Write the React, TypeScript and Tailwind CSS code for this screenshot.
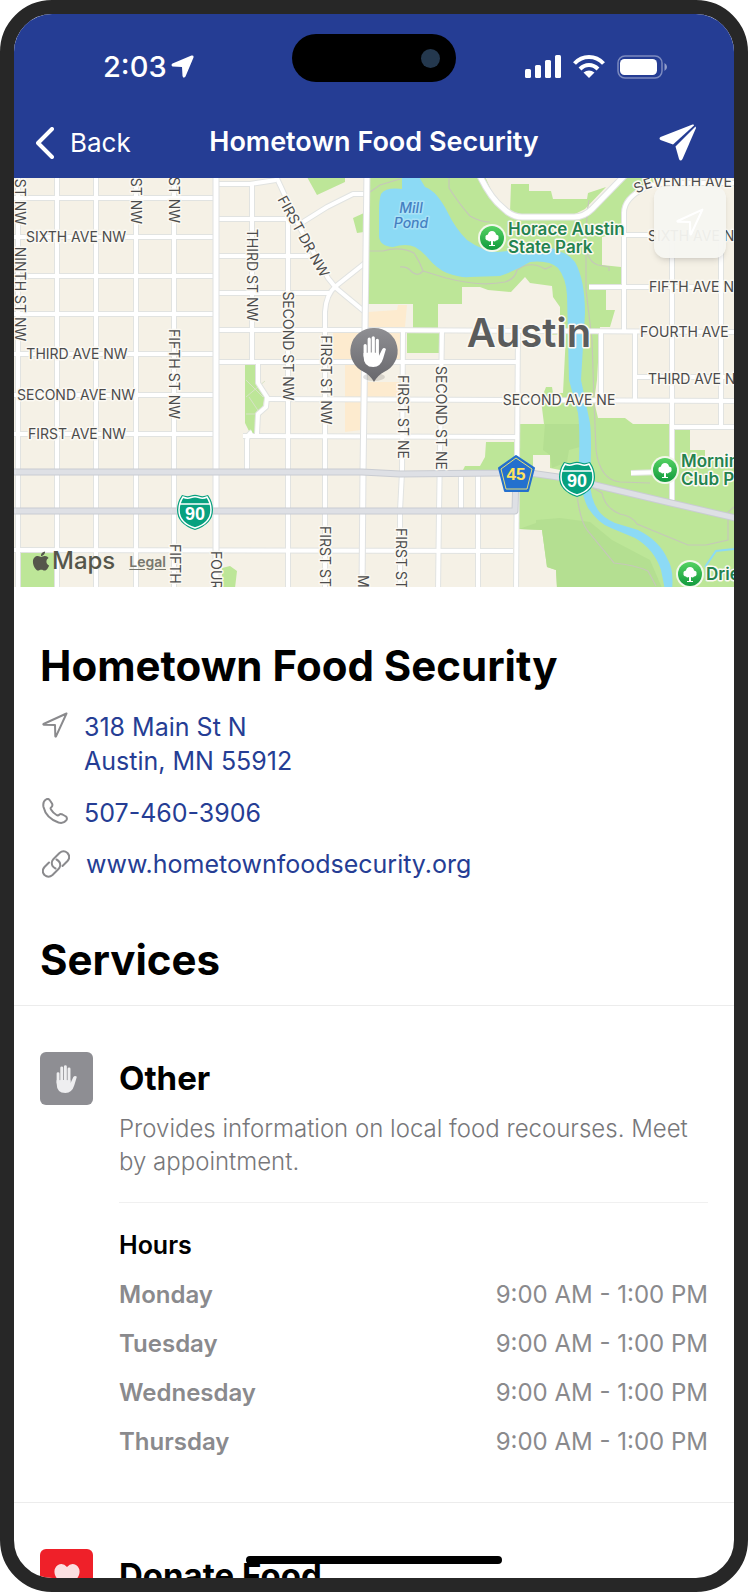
import { FaApple } from "react-icons/fa";

const localRoads = [
  // north-south, west side
  "M18 170V592", "M57 170V592", "M96 170V592", "M136 170V592", "M174 170V592", "M252 184V362",
  "M288 219V592", "M403 331L402 472L400 511V592", "M442 331L439 511L438 592",
  "M461 472V511", "M478 472V592", "M518 332L516 592",
  // east-west, west side
  "M10 198H216", "M10 237H216", "M10 276H216", "M10 314H216", "M10 354H216", "M10 395H216", "M10 434H216",
  "M10 550L513 551", "M216 184L250 184L276 180", "M216 219H298", "M216 256H310", "M216 293H329",
  "M216 330H365L734 332", "M216 362H518", "M267 399L740 401", "M243 436L516 437",
  // around the small park
  "M258 362V383L267 397L266 407L258 414L257 434", "M247 472V440Q248 434 252 432",
  // diagonals
  "M274 172L300 228L328 278L336 288L365 312", "M303 222L327 207L353 194H367",
  "M365 263L336 286Q326 294 325 312V592",
  // east side
  "M624 332V213Q624 198 645 188Q652 183 680 183H740", "M672 235V500", "M721 235V427", "M635 332V400", "M601 332V400",
  "M624 235H740", "M589 287H740", "M636 377H740", "M672 427H740", "M631 473L662 472",
];

const mainRoads = [
  "M216 170V592", "M367 170L365 330L363 472L362 592",
  "M478 172Q490 198 503 208Q512 217 522 217H574Q584 217 592 209L628 172",
];

const highways = [
  "M10 472H362L400 474L498 473L516 471L558 477L595 485L671 503L740 519",
  "M10 511H515L516 474",
];

const trails = [
  "M370 192L380 185L400 179", "M369 251H383Q400 246 414 253Q420 262 423 271Q418 277 412 272Q407 266 400 267",
  "M423 271L446 278Q480 287 505 282Q515 279 517 270Q530 260 545 269L552 266", "M449 177V188Q460 205 470 216Q480 222 490 222",
  "M589 200Q586 215 586 250Q590 263 598 265L609 267V271", "M586 250V290L592 340L594 400L596 450Q600 480 620 482L650 483",
  "M577 495Q580 520 587 530L614 563Q635 565 648 571L656 586", "M593 488L602 493Q605 508 620 514Q632 516 637 524L688 545H706L728 540V512L734 507",
];

const labels = [
  { text: "SIXTH AVE NW", x: 76, y: 236 },
  { text: "THIRD AVE NW", x: 77, y: 353 },
  { text: "SECOND AVE NW", x: 76, y: 394 },
  { text: "FIRST AVE NW", x: 77, y: 433 },
  { text: "SECOND AVE NE", x: 559, y: 399 },
  { text: "NINTH ST NW", x: 20, y: 294, turn: 90 },
  { text: "ST NW", x: 20, y: 225, turn: 90, anchor: "end" },
  { text: "ST NW", x: 136, y: 224, turn: 90, anchor: "end" },
  { text: "ST NW", x: 174, y: 223, turn: 90, anchor: "end" },
  { text: "FIFTH ST NW", x: 174, y: 374, turn: 90 },
  { text: "THIRD ST NW", x: 252, y: 275, turn: 90 },
  { text: "FIRST DR NW", x: 304, y: 236, turn: 61 },
  { text: "SECOND ST NW", x: 288, y: 346, turn: 90 },
  { text: "FIRST ST NW", x: 326, y: 380, turn: 90 },
  { text: "FIRST ST NE", x: 403, y: 417, turn: 90 },
  { text: "SECOND ST NE", x: 441, y: 418, turn: 90 },
  { text: "FIFTH", x: 175, y: 544, turn: 90, anchor: "start" },
  { text: "FOUR", x: 216, y: 551, turn: 90, anchor: "start" },
  { text: "FIRST ST", x: 325, y: 526, turn: 90, anchor: "start" },
  { text: "M", x: 363, y: 575, turn: 90, anchor: "start" },
  { text: "FIRST ST", x: 401, y: 528, turn: 90, anchor: "start" },
  { text: "SIXTH AVE N", x: 648, y: 235, anchor: "start" },
  { text: "FIFTH AVE N", x: 649, y: 286, anchor: "start" },
  { text: "FOURTH AVE", x: 640, y: 331, anchor: "start" },
  { text: "THIRD AVE N", x: 648, y: 378, anchor: "start" },
];

const hours = [
  { day: "Monday", time: "9:00 AM - 1:00 PM" },
  { day: "Tuesday", time: "9:00 AM - 1:00 PM" },
  { day: "Wednesday", time: "9:00 AM - 1:00 PM" },
  { day: "Thursday", time: "9:00 AM - 1:00 PM" },
];

const HandShape = () => (
  <>
    <g stroke="currentColor" strokeWidth="9" strokeLinecap="round">
      <path d="M6 27V56M17.500 9V56M29 5V56M40.500 12V56" />
    </g>
    <path
      fill="currentColor"
      d="M1.500 48Q23 46 45 48V57L54 38Q59 31 65 37L57 64Q50 88 29 88Q1.500 88 1.500 58Z"
    />
  </>
);

const ArrowOutline = ({ className }: { className: string }) => (
  <svg viewBox="0 0 26 26" className={className} fill="none" stroke="currentColor" strokeWidth="2" strokeLinejoin="round" aria-hidden="true">
    <path d="M24.500 1.500L1.500 12Q1 12.500 1.800 12.700L13 13L13.300 24.200Q13.500 25 14 24.300Z" />
  </svg>
);

const Roads = ({ paths, casing, fill, width }: { paths: string[]; casing: string; fill: string; width: number }) => (
  <g fill="none" strokeLinejoin="round">
    {paths.map((d) => <path key={d} d={d} stroke={casing} strokeWidth={width + 2} />)}
    {paths.map((d) => <path key={d + "fill"} d={d} stroke={fill} strokeWidth={width} />)}
  </g>
);

const ParkMarker = ({ x, y }: { x: number; y: number }) => (
  <g transform={`translate(${x} ${y})`}>
    <circle r="14" fill="#f3f8ea" />
    <circle r="12" fill="url(#park)" />
    <path fill="#fff" d="M-1 7V3Q-3 4-4 2.500Q-7 2-6.500-0.500Q-7-3-4-3.500Q-3.500-7 0-7Q3.500-7 4-3.500Q7-3 6.500-0.500Q7 2 4 2.500Q3 4 1 3V7H3V8H-3V7Z" />
  </g>
);

const Interstate = ({ x, y }: { x: number; y: number }) => (
  <g transform={`translate(${x} ${y})`}>
    <path
      d="M-13-17Q-8-15-4-16.500Q0-18 4-16.500Q8-15 13-17Q18-10 18-2Q18 12 0 18Q-18 12-18-2Q-18-10-13-17Z"
      fill="#07a17f"
    />
    <path
      d="M-12-15Q-8-13-4-14.500Q0-16 4-14.500Q8-13 12-15Q16-9 16-2Q16 11 0 16Q-16 11-16-2Q-16-9-12-15ZM-15-8H15"
      fill="none"
      stroke="#fff"
      strokeWidth="1.500"
    />
    <text y="8" textAnchor="middle" fontSize="18" fontWeight="700" fill="#fff">90</text>
  </g>
);

const TownMap = () => (
  <svg
    viewBox="14 178 720 409"
    preserveAspectRatio="xMidYMid slice"
    className="block h-[409px] w-full"
    role="img"
    aria-label="Map of Austin"
  >
    <defs>
      <linearGradient id="park" x1="0" y1="0" x2="0" y2="1">
        <stop offset="0" stopColor="#55d262" />
        <stop offset="1" stopColor="#119a3d" />
      </linearGradient>
      <linearGradient id="pin" x1="0" y1="0" x2="0" y2="1">
        <stop offset="0" stopColor="#8f8f93" />
        <stop offset="1" stopColor="#67676c" />
      </linearGradient>
      <path id="seventh" d="M637 194Q646 188 656 187H760" />
    </defs>
    <rect x="14" y="170" width="720" height="420" fill="#f5f1e6" />

    {/* parks */}
    <g fill="#bde698">
      <path d="M367 170H482L498 205L511 215L578 217L588 212L623 177H662L638 190L625 202L623 232L602 237V265L621 267V284L589 286V289H606V310H615L610 327H600L597 380L594 401L598 418H625L633 424H670L674 429H690V450H705V458H734V588H557L556 570L547 567L542 530L519 529V424H544L541 400L546 387H552L553 393H563L566 334L547 335V330H560V307L553 297L552 286L530 283L525 277L511 292L488 290L480 287H462V304H438V328H413V304H367Z" />
      <path d="M511 184H529V191H551L553 199H587L588 193L606 187L585 209L575 214H518L510 212Z" />
      <path d="M307 177H345V182L317 195ZM353 218L364 213V232L357 233ZM407 333H439V353H407ZM245 364H257V384L265 397L256 433H250L245 423Z" />
      <path d="M486 442H514V470H463L465 466H480L485 457Z" />
      <path d="M20 553H55V588H20ZM222 568L230 566L237 571L235 588H222Z" />
    </g>
    <path fill="#b4df91" d="M545 424H580V447L569 450L567 462L552 468L550 455L543 450ZM536 520L560 518L590 522L612 540L650 560L662 588H557L556 570L547 567L542 530L519 529L536 523Z" />
    <path fill="#f5f1e6" d="M533 455H550V468L560 470V474H533Z" />
    <path stroke="#d7e2c6" fill="none" d="M246 397L265 381M246 414H262M249 397L259 412M246 380L263 397" />
    <path fill="#fdebcf" d="M368 312L397 310L398 305H407L405 327H368ZM333 333H405V359H361V430L345 432V362H333ZM367 382H399V397H367Z" />

    <g fill="none" stroke="#c5c8b8" strokeWidth="1.200">
      {trails.map((d) => <path key={d} d={d} />)}
    </g>

    {/* pond and river */}
    <path
      fill="#8cdaf5"
      d="M402 170V189Q386 187 381 194Q379 200 379 210V237Q380 246 393 247Q406 243 415 247Q422 251 427 257Q437 269 447 273Q460 278 470 277L500 276Q515 271 530 262Q549 260 558 268Q566 278 567 295L569 380L578 413Q580 430 579 460Q579 490 588 508Q599 524 611 528L635 538Q654 549 661 570L665 590H672Q674 570 668 560Q660 541 638 530L615 523Q602 517 598 510Q590 498 590 480Q592 440 590 423L581 380L585 313Q585 280 575 262Q570 255 561 252Q548 244 525 249L498 252Q484 252 467 240Q455 228 448 213Q437 191 425 187L415 170Z"
    />
    <path fill="none" stroke="#8cdaf5" strokeWidth="2" d="M705 567L716 551L734 549" />

    <Roads paths={localRoads} casing="#e1e3e1" fill="#fff" width={4} />
    <Roads paths={mainRoads} casing="#dfe1e1" fill="#fff" width={5} />
    <Roads paths={highways} casing="#c9ccd2" fill="#dee0e5" width={5} />

    <g fontFamily="Inter, sans-serif" stroke="#fbf9f3" strokeWidth="3" strokeLinejoin="round" paintOrder="stroke">
      <g fontSize="14" fill="#4c4c4c">
        {labels.map(({ text, x, y, turn = 0, anchor = "middle" }) => (
          <text
            key={`${text}${x}${y}`}
            transform={`translate(${x} ${y}) rotate(${turn})`}
            textAnchor={anchor as "start" | "middle" | "end"}
            dominantBaseline="central"
          >
            {text}
          </text>
        ))}
        <text><textPath href="#seventh">SEVENTH AVE</textPath></text>
      </g>
      <text x="529" y="347" textAnchor="middle" fontSize="40" fontWeight="600" fill="#5a5c5c">Austin</text>
      <g fontSize="17" fontWeight="600" fill="#24834f">
        <text x="508" y="235">Horace Austin</text>
        <text x="508" y="253">State Park</text>
        <text x="681" y="467">Mornin</text>
        <text x="681" y="485">Club P</text>
        <text x="706" y="580">Drie</text>
      </g>
      <g fontSize="14" fontStyle="italic" fontWeight="500" fill="#4580c2" stroke="#a9e2f7" textAnchor="middle">
        <text x="411" y="213">Mill</text>
        <text x="411" y="228">Pond</text>
      </g>
    </g>

    <ParkMarker x={492} y={238} />
    <ParkMarker x={665} y={470} />
    <ParkMarker x={690} y={574} />
    <g fontFamily="'Liberation Sans', sans-serif">
      <Interstate x={195} y={512} />
      <Interstate x={577} y={479} />
      <path d="M516 456L534 468L528 491H505L499 468Z" fill="#2470ce" stroke="#2470ce" strokeLinejoin="round" strokeWidth="2" />
      <path d="M516 458L532 469L527 489H506L501 469Z" fill="none" stroke="#e8df74" />
      <text x="516" y="480" textAnchor="middle" fontSize="17" fontWeight="700" fill="#ffe45c">45</text>
    </g>

    {/* selected place */}
    <ellipse cx="374" cy="377" rx="11" ry="4" fill="#000" opacity="0.120" />
    <path d="M374 328A23 23 0 0 1 384 372Q378 375 374 382Q370 375 364 372A23 23 0 0 1 374 328Z" fill="url(#pin)" />
    <svg x="363" y="336" width="23" height="31" viewBox="0 0 65 88" className="text-white"><HandShape /></svg>
  </svg>
);

const StatusBar = () => (
  <div className="flex h-[93px] items-center justify-between pt-3 pr-[66px] pl-[89px]">
    <div className="flex items-center gap-1 text-[29px] font-medium">
      <span>2:03</span>
      <svg viewBox="0 0 23 23" className="size-[23px]" fill="currentColor" aria-hidden="true">
        <path d="M22.500 2.500Q23 0 20.500 0.500L1.500 8.500Q-0.500 10 1.500 11.500L11 12L11.500 21Q12.500 24 14.500 21.500Z" />
      </svg>
    </div>
    <div className="flex items-center gap-3">
      <svg viewBox="0 0 36 23" className="h-[23px] w-9" fill="currentColor" aria-hidden="true">
        <rect y="14" width="6" height="9" rx="1.500" />
        <rect x="10" y="10" width="6" height="13" rx="1.500" />
        <rect x="20" y="5" width="6" height="18" rx="1.500" />
        <rect x="30" width="6" height="23" rx="1.500" />
      </svg>
      <svg viewBox="0 0 32 23" className="h-[23px] w-8" fill="none" stroke="currentColor" strokeWidth="4" aria-hidden="true">
        <path d="M1.500 8.500Q7.500 2 16 2Q24.500 2 30.500 8.500" />
        <path d="M7 14Q11 10 16 10Q21 10 25 14" />
        <path d="M16 23L10.500 17.500Q16 13.500 21.500 17.500Z" fill="currentColor" stroke="none" />
      </svg>
      <svg viewBox="0 0 51 24" className="h-6 w-[51px]" aria-hidden="true">
        <rect x="1" y="1" width="44" height="22" rx="7" fill="none" stroke="#fff" strokeOpacity="0.400" strokeWidth="1.500" />
        <rect x="3" y="4" width="37" height="16" rx="4.500" fill="#fff" />
        <path d="M47.500 8Q50 9.500 50 12T47.500 16Z" fill="#fff" fillOpacity="0.500" />
      </svg>
    </div>
  </div>
);

const NavBar = () => (
  <nav className="grid h-[71px] grid-cols-[1fr_auto_1fr] items-center px-[22px]">
    <button type="button" className="flex items-center gap-4 justify-self-start text-[26px]">
      <svg viewBox="0 0 18 32" className="h-8 w-[18px]" fill="none" stroke="currentColor" strokeWidth="4" strokeLinecap="round" strokeLinejoin="round" aria-hidden="true">
        <path d="M16 2L2 16L16 30" />
      </svg>
      Back
    </button>
    <span className="text-[27px] font-semibold">Hometown Food Security</span>
    <button type="button" aria-label="Directions" className="mr-4 justify-self-end">
      <svg viewBox="0 0 37 37" className="size-[37px]" fill="currentColor" aria-hidden="true">
        <path d="M33.500 0.500L1.500 13Q-0.500 14.500 1.500 16L14 20.500L35 1.500Q35 0 33.500 0.500Z" />
        <path d="M36.500 2.500L16.500 22.500L20 35Q21.500 38 23.500 35L37 4Z" />
      </svg>
    </button>
  </nav>
);

const App = () => {
  return (
    <div className="relative flex h-screen flex-col overflow-hidden rounded-[52px] border-[14px] border-[#272727] bg-white font-['Inter',sans-serif] text-black">
      <header className="shrink-0 bg-[#253d94] text-white">
        <StatusBar />
        <NavBar />
      </header>
      <div className="absolute top-5 left-1/2 flex h-12 w-[164px] -translate-x-1/2 items-center justify-end rounded-full bg-black pr-4">
        <span className="size-[19px] rounded-full bg-[#24384e]" />
      </div>

      <main className="min-h-0 flex-1 overflow-hidden">
        <section className="relative">
          <TownMap />
          <button
            type="button"
            aria-label="Show my location"
            className="absolute top-2 right-2 flex size-[72px] items-center justify-center rounded-xl bg-[#f6f5f1]/95 text-white shadow-md"
          >
            <ArrowOutline className="size-7" />
          </button>
          <div className="absolute bottom-2 left-4 flex items-center gap-[14px] text-[#55564b]">
            <span className="flex items-center text-[24px] leading-9 font-medium">
              <FaApple className="size-[22px]" aria-hidden="true" />
              Maps
            </span>
            <a href="#legal" className="text-[14px] font-semibold text-[#77776e] underline underline-offset-2">Legal</a>
          </div>
        </section>

        <section className="px-[26px] pt-[53px]">
          <h1 className="text-[42px] leading-[52px] font-bold">Hometown Food Security</h1>
          <address className="mt-[18px] pl-[2px] text-[25px] leading-[34px] text-[#253d94] not-italic">
            <div className="flex gap-4">
              <ArrowOutline className="mt-[2px] size-[26px] text-[#8a8a8d]" />
              <a href="#directions">318 Main St N<br />Austin, MN 55912</a>
            </div>
            <div className="mt-[18px] flex gap-4">
              <svg viewBox="0 0 26 26" className="mt-[2px] size-[26px] text-[#8a8a8d]" fill="none" stroke="currentColor" strokeWidth="2" strokeLinejoin="round" aria-hidden="true">
                <path d="M4 1.500Q6.500 0 8 2.500L10 5.500Q11 7.500 9.500 9Q8 10 9 11.500Q11 15 14.500 17Q16 18 17.500 16.500Q18.500 15.500 20.500 16.500L24 18.500Q25.500 20 24.500 22Q21.500 26 16.500 24.500Q4 20 1.500 9Q0.500 3.500 4 1.500Z" />
              </svg>
              <a href="tel:507-460-3906">507-460-3906</a>
            </div>
            <div className="mt-[17px] flex gap-4">
              <svg viewBox="0 0 28 28" className="mt-[3px] size-7 text-[#8a8a8d]" fill="none" stroke="currentColor" strokeWidth="2" strokeLinecap="round" aria-hidden="true">
                <path d="M13.500 18.500Q9.500 16.500 9.800 12.500Q10 10.500 11.500 9L17.500 3Q21.500 -0.500 25.500 3Q29 7 25.500 11L20.500 16" />
                <path d="M14.500 9.500Q18.500 11.500 18.200 15.500Q18 17.500 16.500 19L10.500 25Q6.500 28.500 2.500 25Q-1 21 2.500 17L7 12.500" />
              </svg>
              <a href="#website">www.hometownfoodsecurity.org</a>
            </div>
          </address>
          <h2 className="mt-[53px] pb-[19px] text-[42px] leading-[52px] font-bold">Services</h2>
        </section>

        <section className="flex gap-[26px] border-y border-[#ececec] px-[26px] pt-[46px] pb-9">
          <div className="flex size-[53px] shrink-0 items-center justify-center rounded-md bg-[#8e8e93]">
            <svg viewBox="0 0 65 88" className="h-7 w-[21px] text-[#eeeef0]" aria-hidden="true"><HandShape /></svg>
          </div>
          <div className="min-w-0 flex-1">
            <h3 className="text-[33px] leading-[53px] font-bold">Other</h3>
            <p className="mt-[7px] pb-6 text-[24px] leading-[33px] font-light text-[#77777a]">
              Provides information on local food recourses. Meet by appointment.
            </p>
            <div className="border-t border-[#f0f0f0] pt-[18px]">
              <table className="w-full text-[24px] leading-[49px] text-[#8a8a8d]">
                <caption className="text-left text-[25px] leading-[49px] font-semibold text-black">Hours</caption>
                <tbody>
                  {hours.map(({ day, time }) => (
                    <tr key={day}>
                      <th scope="row" className="p-0 text-left font-semibold">{day}</th>
                      <td className="p-0 text-right">{time}</td>
                    </tr>
                  ))}
                </tbody>
              </table>
            </div>
          </div>
        </section>

        <section className="flex gap-[26px] px-[26px] pt-[46px]">
          <div className="flex size-[53px] shrink-0 items-center justify-center rounded-md bg-[#ef2029]">
            <svg viewBox="0 0 26 24" className="h-6 w-[26px]" fill="#fbdfe1" aria-hidden="true">
              <path d="M13 3Q17-1.500 22 1Q27 4.500 25 11Q22 18 13 24Q4 18 1 11Q-1 4.500 4 1Q9-1.500 13 3Z" />
            </svg>
          </div>
          <h3 className="text-[33px] leading-[53px] font-bold">Donate Food</h3>
        </section>
      </main>

      <div className="absolute bottom-[14px] left-1/2 h-2 w-64 -translate-x-1/2 rounded-full bg-black" />
    </div>
  );
};

export default App;
